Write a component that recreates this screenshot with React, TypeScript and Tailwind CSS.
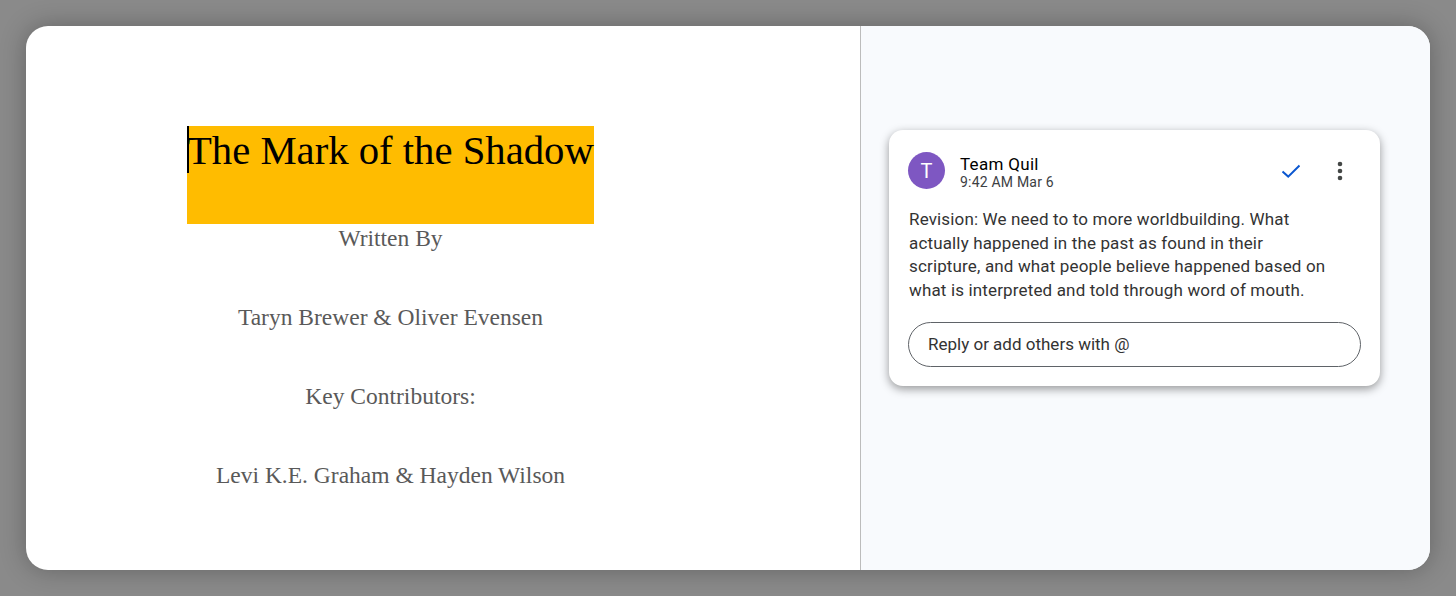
const credits = [
  "Written By",
  "Taryn Brewer & Oliver Evensen",
  "Key Contributors:",
  "Levi K.E. Graham & Hayden Wilson",
];

export default function App() {
  return (
    <div className="h-[596px] w-[1456px] overflow-hidden bg-[#8a8a8a] p-[26px] pb-[26px]">
      <div className="flex h-[544px] w-[1404px] overflow-hidden rounded-[22px] bg-white shadow-[0_0_26px_rgba(0,0,0,0.28)]">
        {/* Document page */}
        <div className="w-[835px] border-r border-[#bcbcbc] pl-[161px] pt-[100px] font-['Liberation_Serif',serif]">
          <div className="w-[407px]">
            <div className="relative h-[98px] bg-[#ffbc00] text-[40.7px] leading-[49px] whitespace-nowrap text-black">
              <span className="absolute left-0 top-0 h-[47px] w-[2px] bg-black" />
              The Mark of the Shadow
            </div>
            <div className="flex flex-col gap-[52px] pt-px text-center text-[23.5px] leading-[27px] text-[#595959]">
              {credits.map((line) => (
                <p key={line} className="whitespace-nowrap">
                  {line}
                </p>
              ))}
            </div>
          </div>
        </div>

        {/* Comments sidebar */}
        <div className="flex-1 bg-[#f8fafd] pl-[28px] pt-[104px] font-['Roboto',sans-serif]">
          <div className="h-[256px] w-[491px] rounded-[14px] bg-white px-[19px] pt-[22px] shadow-[0_3px_10px_rgba(0,0,0,0.4)]">
            <div className="flex items-center">
              <div className="flex h-[37px] w-[37px] items-center justify-center rounded-full bg-[#7e57c2] text-[20px] text-white">
                T
              </div>
              <div className="ml-[15px] h-[37px] flex-1 pt-[3px]">
                <div className="text-[17px] leading-[18px] tracking-[0.3px] text-black">Team Quil</div>
                <div className="text-[14px] leading-[18px] tracking-[0.2px] text-[#3c4043]">9:42 AM Mar 6</div>
              </div>
              <svg width="24" height="24" viewBox="0 0 24 24" className="mr-[25px]" fill="none">
                <path d="M3.5 12.5 L9.2 17.6 L20.5 6.5" stroke="#0b57d0" strokeWidth="2" />
              </svg>
              <svg width="24" height="24" viewBox="0 0 24 24" className="mr-[9px]" fill="#444746">
                <circle cx="12" cy="5" r="2.3" />
                <circle cx="12" cy="12" r="2.3" />
                <circle cx="12" cy="19" r="2.3" />
              </svg>
            </div>
            <p className="mt-[19px] whitespace-nowrap pl-px text-[17px] leading-[23.5px] tracking-[0.15px] text-[#333333]">
              Revision: We need to to more worldbuilding. What
              <br />
              actually happened in the past as found in their
              <br />
              scripture, and what people believe happened based on
              <br />
              what is interpreted and told through word of mouth.
            </p>
            <div className="mt-[20px] flex h-[45px] w-[453px] items-center rounded-full border border-[#5f6368] pl-[19px] text-[17px] text-[#333333]">
              Reply or add others with @
            </div>
          </div>
        </div>
      </div>
    </div>
  );
}
